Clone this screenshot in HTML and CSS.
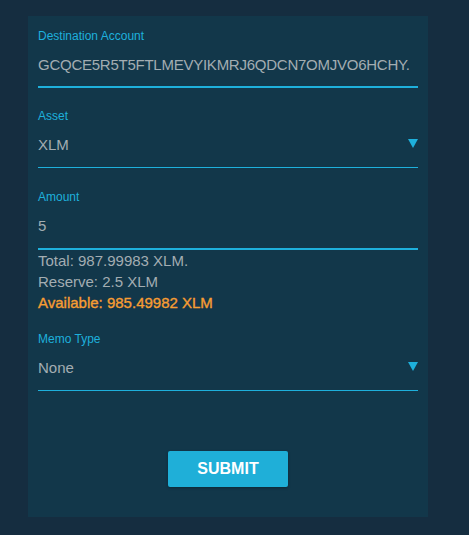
FILE: index.html
```html
<!DOCTYPE html>
<html lang="en">
<head>
<meta charset="utf-8">
<title>Send</title>
<link rel="stylesheet" href="styles.css">
</head>
<body>
<form class="card">
  <div class="field active">
    <label class="label">Destination Account</label>
    <div class="input"><span class="value address">GCQCE5R5T5FTLMEVYIKMRJ6QDCN7OMJVO6HCHY.</span></div>
  </div>
  <div class="field">
    <label class="label">Asset</label>
    <div class="input select"><span class="value">XLM</span><svg class="arrow" width="10" height="9" viewBox="0 0 10 9"><path d="M0 0H10L5 9Z" fill="#1eb0dc"/></svg></div>
  </div>
  <div class="field active amount">
    <label class="label">Amount</label>
    <div class="input"><span class="value">5</span></div>
  </div>
  <div class="info">
    <div>Total: 987.99983 XLM.</div>
    <div>Reserve: 2.5 XLM</div>
    <div class="available">Available: 985.49982 XLM</div>
  </div>
  <div class="field memo">
    <label class="label">Memo Type</label>
    <div class="input select"><span class="value">None</span><svg class="arrow" width="10" height="9" viewBox="0 0 10 9"><path d="M0 0H10L5 9Z" fill="#1eb0dc"/></svg></div>
  </div>
  <div class="actions">
    <button type="button" class="submit">SUBMIT</button>
  </div>
</form>
</body>
</html>
```

FILE: styles.css
```css
html, body {
  margin: 0;
  height: 100%;
}
body {
  background: #152d40;
  font-family: "Liberation Sans", Arial, sans-serif;
  padding: 16px 0 0 28px;
  box-sizing: border-box;
}
.card {
  width: 400px;
  box-sizing: border-box;
  background: #12374a;
  padding: 13px 10px 30px;
}
.field {
  margin-top: 21px;
}
.field:first-child {
  margin-top: 0;
}
.field.amount {
  margin-top: 22px;
}
.field.memo {
  margin-top: 19px;
}
.label {
  display: block;
  font-size: 12px;
  line-height: 14px;
  color: #1eb0dc;
}
.input {
  display: flex;
  align-items: flex-start;
  padding: 12px 0;
  font-size: 15px;
  line-height: 20px;
  color: #a3adb2;
  border-bottom: 1px solid #1eb0dc;
  margin-bottom: 1px;
}
.field:first-child .input {
  padding-bottom: 11px;
}
.field.active .input {
  border-bottom-width: 2px;
  margin-bottom: 0;
}
.value {
  flex: 1;
  min-width: 0;
}
.address {
  white-space: nowrap;
  letter-spacing: -0.25px;
}
.arrow {
  margin-top: 4px;
  flex: none;
}
.info {
  font-size: 15px;
  line-height: 21px;
  color: #a3adb2;
}
.info .available {
  color: #f79d33;
  -webkit-text-stroke: 0.35px #f79d33;
}
.actions {
  display: flex;
  justify-content: center;
  margin-top: 60px;
}
.submit {
  width: 120px;
  height: 36px;
  border: none;
  border-radius: 2px;
  background: #1fafd8;
  color: #ffffff;
  font-family: "Liberation Sans", Arial, sans-serif;
  font-weight: bold;
  font-size: 16px;
  padding: 0;
  box-shadow: 0 1px 3px rgba(0, 0, 0, 0.3);
}
```
